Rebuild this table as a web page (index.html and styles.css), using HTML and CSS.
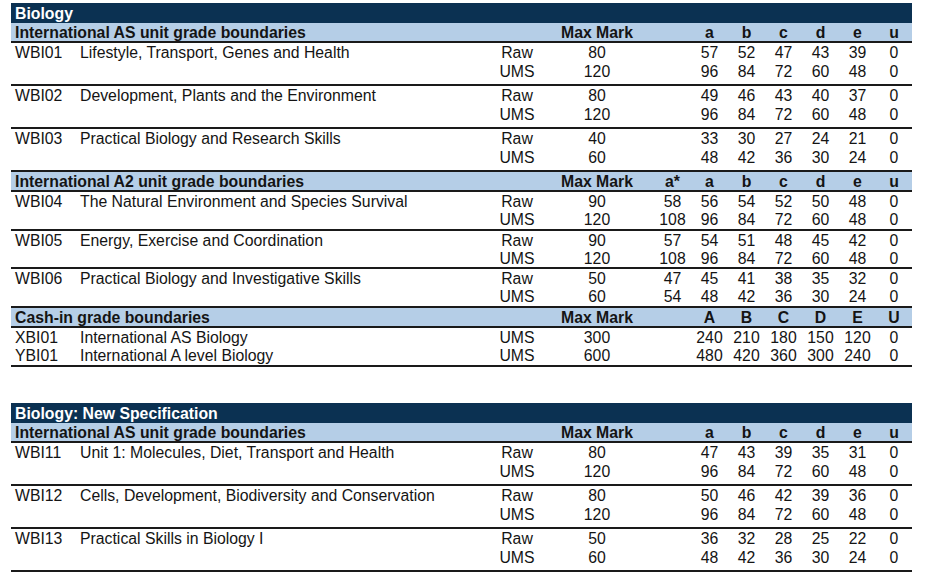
FILE: index.html
```html
<!DOCTYPE html>
<html>
<head>
<meta charset="utf-8">
<link rel="stylesheet" href="styles.css">
</head>
<body>
<div class="sheet">
  <section class="spec">
    <div class="spec-title">Biology</div>
    <div class="row group-head"><span class="label">International AS unit grade boundaries</span><span class="max">Max Mark</span><span class="g"></span><span class="g">a</span><span class="g">b</span><span class="g">c</span><span class="g">d</span><span class="g">e</span><span class="g">u</span></div>
    <div class="unit as">
      <div class="row"><span class="code">WBI01</span><span class="title">Lifestyle, Transport, Genes and Health</span><span class="type">Raw</span><span class="max">80</span><span class="g"></span><span class="g">57</span><span class="g">52</span><span class="g">47</span><span class="g">43</span><span class="g">39</span><span class="g">0</span></div>
      <div class="row"><span class="code"></span><span class="title"></span><span class="type">UMS</span><span class="max">120</span><span class="g"></span><span class="g">96</span><span class="g">84</span><span class="g">72</span><span class="g">60</span><span class="g">48</span><span class="g">0</span></div>
    </div>
    <div class="unit as">
      <div class="row"><span class="code">WBI02</span><span class="title">Development, Plants and the Environment</span><span class="type">Raw</span><span class="max">80</span><span class="g"></span><span class="g">49</span><span class="g">46</span><span class="g">43</span><span class="g">40</span><span class="g">37</span><span class="g">0</span></div>
      <div class="row"><span class="code"></span><span class="title"></span><span class="type">UMS</span><span class="max">120</span><span class="g"></span><span class="g">96</span><span class="g">84</span><span class="g">72</span><span class="g">60</span><span class="g">48</span><span class="g">0</span></div>
    </div>
    <div class="unit as">
      <div class="row"><span class="code">WBI03</span><span class="title">Practical Biology and Research Skills</span><span class="type">Raw</span><span class="max">40</span><span class="g"></span><span class="g">33</span><span class="g">30</span><span class="g">27</span><span class="g">24</span><span class="g">21</span><span class="g">0</span></div>
      <div class="row"><span class="code"></span><span class="title"></span><span class="type">UMS</span><span class="max">60</span><span class="g"></span><span class="g">48</span><span class="g">42</span><span class="g">36</span><span class="g">30</span><span class="g">24</span><span class="g">0</span></div>
    </div>

    <div class="row group-head"><span class="label">International A2 unit grade boundaries</span><span class="max">Max Mark</span><span class="g">a*</span><span class="g">a</span><span class="g">b</span><span class="g">c</span><span class="g">d</span><span class="g">e</span><span class="g">u</span></div>
    <div class="unit a2">
      <div class="row"><span class="code">WBI04</span><span class="title">The Natural Environment and Species Survival</span><span class="type">Raw</span><span class="max">90</span><span class="g">58</span><span class="g">56</span><span class="g">54</span><span class="g">52</span><span class="g">50</span><span class="g">48</span><span class="g">0</span></div>
      <div class="row"><span class="code"></span><span class="title"></span><span class="type">UMS</span><span class="max">120</span><span class="g">108</span><span class="g">96</span><span class="g">84</span><span class="g">72</span><span class="g">60</span><span class="g">48</span><span class="g">0</span></div>
    </div>
    <div class="unit a2">
      <div class="row"><span class="code">WBI05</span><span class="title">Energy, Exercise and Coordination</span><span class="type">Raw</span><span class="max">90</span><span class="g">57</span><span class="g">54</span><span class="g">51</span><span class="g">48</span><span class="g">45</span><span class="g">42</span><span class="g">0</span></div>
      <div class="row"><span class="code"></span><span class="title"></span><span class="type">UMS</span><span class="max">120</span><span class="g">108</span><span class="g">96</span><span class="g">84</span><span class="g">72</span><span class="g">60</span><span class="g">48</span><span class="g">0</span></div>
    </div>
    <div class="unit a2">
      <div class="row"><span class="code">WBI06</span><span class="title">Practical Biology and Investigative Skills</span><span class="type">Raw</span><span class="max">50</span><span class="g">47</span><span class="g">45</span><span class="g">41</span><span class="g">38</span><span class="g">35</span><span class="g">32</span><span class="g">0</span></div>
      <div class="row"><span class="code"></span><span class="title"></span><span class="type">UMS</span><span class="max">60</span><span class="g">54</span><span class="g">48</span><span class="g">42</span><span class="g">36</span><span class="g">30</span><span class="g">24</span><span class="g">0</span></div>
    </div>

    <div class="row group-head"><span class="label">Cash-in grade boundaries</span><span class="max">Max Mark</span><span class="g"></span><span class="g">A</span><span class="g">B</span><span class="g">C</span><span class="g">D</span><span class="g">E</span><span class="g">U</span></div>
    <div class="unit cash">
      <div class="row"><span class="code">XBI01</span><span class="title">International AS Biology</span><span class="type">UMS</span><span class="max">300</span><span class="g"></span><span class="g">240</span><span class="g">210</span><span class="g">180</span><span class="g">150</span><span class="g">120</span><span class="g">0</span></div>
      <div class="row"><span class="code">YBI01</span><span class="title">International A level Biology</span><span class="type">UMS</span><span class="max">600</span><span class="g"></span><span class="g">480</span><span class="g">420</span><span class="g">360</span><span class="g">300</span><span class="g">240</span><span class="g">0</span></div>
    </div>
  </section>

  <section class="spec">
    <div class="spec-title">Biology: New Specification</div>
    <div class="row group-head"><span class="label">International AS unit grade boundaries</span><span class="max">Max Mark</span><span class="g"></span><span class="g">a</span><span class="g">b</span><span class="g">c</span><span class="g">d</span><span class="g">e</span><span class="g">u</span></div>
    <div class="unit as">
      <div class="row"><span class="code">WBI11</span><span class="title">Unit 1: Molecules, Diet, Transport and Health</span><span class="type">Raw</span><span class="max">80</span><span class="g"></span><span class="g">47</span><span class="g">43</span><span class="g">39</span><span class="g">35</span><span class="g">31</span><span class="g">0</span></div>
      <div class="row"><span class="code"></span><span class="title"></span><span class="type">UMS</span><span class="max">120</span><span class="g"></span><span class="g">96</span><span class="g">84</span><span class="g">72</span><span class="g">60</span><span class="g">48</span><span class="g">0</span></div>
    </div>
    <div class="unit as">
      <div class="row"><span class="code">WBI12</span><span class="title">Cells, Development, Biodiversity and Conservation</span><span class="type">Raw</span><span class="max">80</span><span class="g"></span><span class="g">50</span><span class="g">46</span><span class="g">42</span><span class="g">39</span><span class="g">36</span><span class="g">0</span></div>
      <div class="row"><span class="code"></span><span class="title"></span><span class="type">UMS</span><span class="max">120</span><span class="g"></span><span class="g">96</span><span class="g">84</span><span class="g">72</span><span class="g">60</span><span class="g">48</span><span class="g">0</span></div>
    </div>
    <div class="unit as">
      <div class="row"><span class="code">WBI13</span><span class="title">Practical Skills in Biology I</span><span class="type">Raw</span><span class="max">50</span><span class="g"></span><span class="g">36</span><span class="g">32</span><span class="g">28</span><span class="g">25</span><span class="g">22</span><span class="g">0</span></div>
      <div class="row"><span class="code"></span><span class="title"></span><span class="type">UMS</span><span class="max">60</span><span class="g"></span><span class="g">48</span><span class="g">42</span><span class="g">36</span><span class="g">30</span><span class="g">24</span><span class="g">0</span></div>
    </div>
  </section>
</div>
</body>
</html>
```

FILE: styles.css
```css
html, body {
  margin: 0;
  padding: 0;
  background: #ffffff;
}

body {
  font-family: "Liberation Sans", Arial, sans-serif;
  font-size: 15.8px;
  color: #141414;
}

.sheet {
  padding: 3px 0 0 11px;
  width: 901px;
  display: flex;
  flex-direction: column;
  gap: 36.5px;
}

.spec {
  display: flex;
  flex-direction: column;
}

.spec-title {
  background: #0b3152;
  color: #ffffff;
  font-weight: bold;
  height: 20px;
  line-height: 21px;
  padding-left: 4px;
}

.row {
  display: grid;
  grid-template-columns: 69px 417px 40px 117px 37px 37px 37px 37px 37px 37px 36px;
  height: 19px;
  line-height: 19px;
  white-space: nowrap;
}

.group-head {
  background: #b5cee7;
  font-weight: bold;
  height: 18px;
  line-height: 19px;
  border-bottom: 2px solid #1a1a1a;
}

.group-head .label {
  grid-column: 1 / 4;
  padding-left: 4px;
}

.code {
  padding-left: 4px;
}

.type,
.max,
.g {
  text-align: center;
}

.max {
  padding-left: 3px;
}

.unit {
  border-bottom: 2px solid #1a1a1a;
}

.unit.as {
  padding-bottom: 3px;
}

.unit.a2 .row {
  height: 18.25px;
}

.unit.cash .row {
  height: 18.5px;
}
```
